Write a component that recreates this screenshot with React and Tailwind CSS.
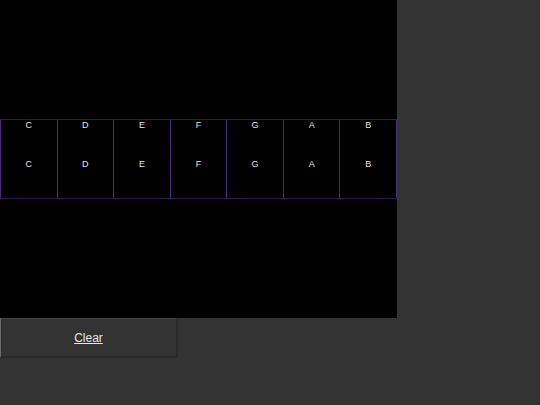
import React from 'react';

const notes = ['C', 'D', 'E', 'F', 'G', 'A', 'B'];

export default function App() {
  return (
    <div className="min-h-[405px] w-[540px] bg-[#333333]" style={{ fontFamily: '"Liberation Sans", Arial, sans-serif' }}>
      <div className="w-[397px] h-[318px] bg-black flex items-center">
        <div className="flex w-full h-[80px] border-y border-[#2e1a4e]">
          {notes.map((n, i) => (
            <div
              key={n}
              className={`flex-1 flex flex-col items-center text-[9px] text-[#e6e6e6] border-l border-[#4a2c7a] ${i === notes.length - 1 ? 'border-r' : ''}`}
            >
              <span className="mt-[-1px] leading-[12px]">{n}</span>
              <span className="mt-[27px] leading-[12px]">{n}</span>
            </div>
          ))}
        </div>
      </div>
      <button className="w-[178px] h-[40px] pt-[1px] bg-[#333333] border-l border-t border-[#6a6a6a] border-t-[#444444] border-r-2 border-b-2 border-r-[#2a2a2a] border-b-[#2a2a2a] text-[12px] text-[#e6e6e6] underline">
        Clear
      </button>
    </div>
  );
}
